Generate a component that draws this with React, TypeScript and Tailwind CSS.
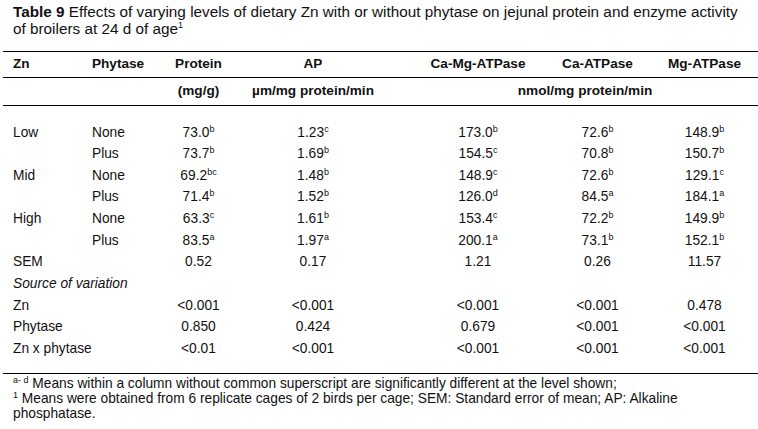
import React from "react";

type Cell = { v: string; s?: string };

const rows: { zn: string; ph: string; cells: Cell[] }[] = [
  { zn: "Low", ph: "None", cells: [{ v: "73.0", s: "b" }, { v: "1.23", s: "c" }, { v: "173.0", s: "b" }, { v: "72.6", s: "b" }, { v: "148.9", s: "b" }] },
  { zn: "", ph: "Plus", cells: [{ v: "73.7", s: "b" }, { v: "1.69", s: "b" }, { v: "154.5", s: "c" }, { v: "70.8", s: "b" }, { v: "150.7", s: "b" }] },
  { zn: "Mid", ph: "None", cells: [{ v: "69.2", s: "bc" }, { v: "1.48", s: "b" }, { v: "148.9", s: "c" }, { v: "72.6", s: "b" }, { v: "129.1", s: "c" }] },
  { zn: "", ph: "Plus", cells: [{ v: "71.4", s: "b" }, { v: "1.52", s: "b" }, { v: "126.0", s: "d" }, { v: "84.5", s: "a" }, { v: "184.1", s: "a" }] },
  { zn: "High", ph: "None", cells: [{ v: "63.3", s: "c" }, { v: "1.61", s: "b" }, { v: "153.4", s: "c" }, { v: "72.2", s: "b" }, { v: "149.9", s: "b" }] },
  { zn: "", ph: "Plus", cells: [{ v: "83.5", s: "a" }, { v: "1.97", s: "a" }, { v: "200.1", s: "a" }, { v: "73.1", s: "b" }, { v: "152.1", s: "b" }] },
  { zn: "SEM", ph: "", cells: [{ v: "0.52" }, { v: "0.17" }, { v: "1.21" }, { v: "0.26" }, { v: "11.57" }] },
];

const pRows: { label: string; cells: string[] }[] = [
  { label: "Zn", cells: ["<0.001", "<0.001", "<0.001", "<0.001", "0.478"] },
  { label: "Phytase", cells: ["0.850", "0.424", "0.679", "<0.001", "<0.001"] },
  { label: "Zn x phytase", cells: ["<0.01", "<0.001", "<0.001", "<0.001", "<0.001"] },
];

const grid = "grid grid-cols-[80px_80px_71px_158px_20px_132px_107px_107px]";

function Val({ c }: { c: Cell }) {
  return (
    <span className="whitespace-nowrap">
      {c.v}
      {c.s ? <span className="relative top-[-5px] text-[9px] leading-none">{c.s}</span> : null}
    </span>
  );
}

function DataCells({ cells }: { cells: Cell[] }) {
  return (
    <>
      <div className="flex items-center justify-center">
        <Val c={cells[0]} />
      </div>
      <div className="flex items-center justify-center">
        <Val c={cells[1]} />
      </div>
      <div />
      <div className="flex items-center justify-center">
        <Val c={cells[2]} />
      </div>
      <div className="flex items-center justify-center">
        <Val c={cells[3]} />
      </div>
      <div className="flex items-center justify-center">
        <Val c={cells[4]} />
      </div>
    </>
  );
}

export default function App() {
  return (
    <div
      className="w-[758px] h-[429px] overflow-hidden bg-white text-[#111]"
      style={{ fontFamily: '"Liberation Sans", Arial, sans-serif' }}
    >
      <div className="pl-[13px] pt-[3px] text-[15.3px] leading-[17px] whitespace-nowrap">
        <span className="font-bold">Table 9</span> Effects of varying levels of dietary Zn with or without phytase on jejunal protein and enzyme activity
        <br />
        of broilers at 24 d of age
        <span className="relative top-[-6px] text-[9px] leading-none">1</span>
      </div>

      <div className="ml-[3px] mt-[14px] w-[755px] text-[13.75px]">
        <div className={`${grid} h-[27px] border-t border-b border-black font-bold text-[13.6px]`}>
          <div className="flex items-center pl-[10px]">Zn</div>
          <div className="flex items-center pl-[9px]">Phytase</div>
          <div className="flex items-center justify-center">Protein</div>
          <div className="flex items-center justify-center">AP</div>
          <div />
          <div className="flex items-center justify-center">Ca-Mg-ATPase</div>
          <div className="flex items-center justify-center">Ca-ATPase</div>
          <div className="flex items-center justify-center">Mg-ATPase</div>
        </div>
        <div className={`${grid} h-[28px] border-b border-black font-bold text-[13.6px]`}>
          <div />
          <div />
          <div className="flex items-center justify-center">(mg/g)</div>
          <div className="flex items-center justify-center">µm/mg protein/min</div>
          <div />
          <div className="col-span-3 flex items-center justify-center">nmol/mg protein/min</div>
        </div>

        <div className="pt-[16px]">
          {rows.map((r, i) => (
            <div key={i} className={`${grid} h-[21.67px]`}>
              <div className="flex items-center pl-[10px]">{r.zn}</div>
              <div className="flex items-center pl-[9px]">{r.ph}</div>
              <DataCells cells={r.cells} />
            </div>
          ))}
          <div className={`${grid} h-[21.67px]`}>
            <div className="col-span-3 flex items-center pl-[10px] italic whitespace-nowrap">Source of variation</div>
          </div>
          {pRows.map((r, i) => (
            <div key={i} className={`${grid} h-[21.67px]`}>
              <div className="col-span-2 flex items-center pl-[10px] whitespace-nowrap">{r.label}</div>
              <DataCells cells={r.cells.map((v) => ({ v }))} />
            </div>
          ))}
        </div>

        <div className="mt-[13px] border-t border-black pt-[2px] pl-[10px] text-[13.75px] leading-[15px] whitespace-nowrap">
          <div>
            <span className="relative top-[-5px] text-[9px] leading-none">a- d</span> Means within a column without common superscript are significantly different at the level shown;
          </div>
          <div>
            <span className="relative top-[-5px] text-[9px] leading-none">1</span> Means were obtained from 6 replicate cages of 2 birds per cage; SEM: Standard error of mean; AP: Alkaline
          </div>
          <div>phosphatase.</div>
        </div>
      </div>
    </div>
  );
}
